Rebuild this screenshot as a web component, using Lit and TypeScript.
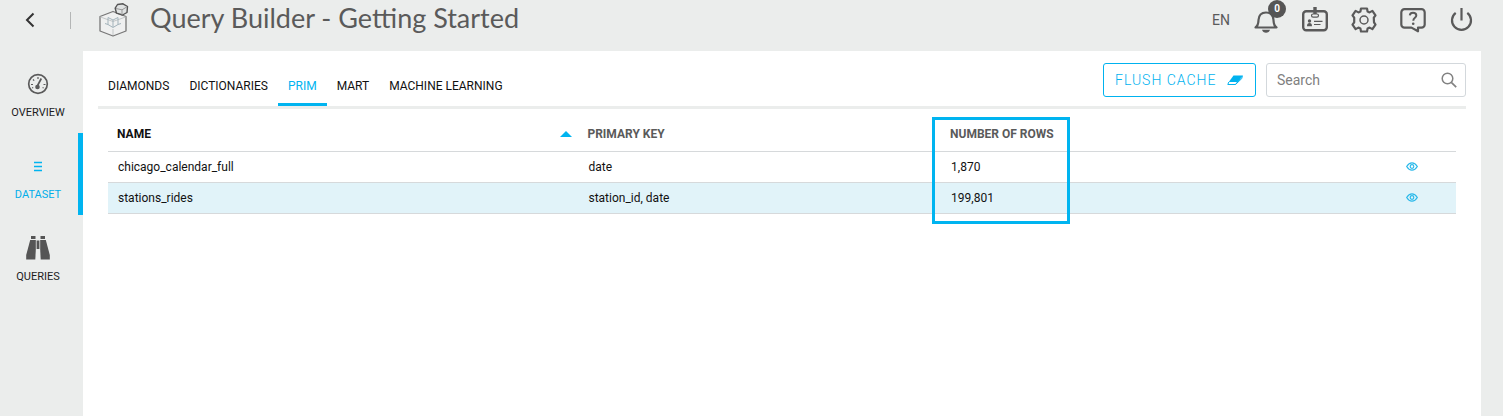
import { LitElement, html, css, svg, nothing } from "lit";
import { customElement, property, state } from "lit/decorators.js";
import { classMap } from "lit/directives/class-map.js";

interface Dataset {
  name: string;
  key: string;
  rows: number;
}

const DATASETS: Dataset[] = [
  { name: "chicago_calendar_full", key: "date", rows: 1870 },
  { name: "stations_rides", key: "station_id, date", rows: 199801 },
];

const TABS = ["DIAMONDS", "DICTIONARIES", "PRIM", "MART", "MACHINE LEARNING"];

const icons = {
  back: svg`<path d="M15.500 5.500 9 12l6.500 6.500" fill="none" stroke="#333" stroke-width="2"/>`,
  cube: svg`
    <g fill="none" stroke-linejoin="round">
      <path d="M1 13.500 14 8.500 27 13.500V28L14 33 1 28Z" fill="#eff0f0" stroke="#777" stroke-width="1.300"/>
      <path d="M1.500 14 14 18.500 26.500 14M14 26v6" stroke="#c3c7c8"/>
      <path d="M9 14.500v7l5 3 5-3v-7M9 14.500l5 2.500 5-2.500M14 17v7M9 21.500l-3-1M19 21.500l3-1" stroke="#a3b3bb"/>
      <path d="M18.500 1.500 24 .8l4.500 2.700-.5 6-4.500 2.500-6-1.800-1.300-5Z" fill="#dfe2e2" stroke="#555" stroke-width="1.400"/>
      <path d="M17 5.500l6 1.300 5-3M23 6.800v5" stroke="#999"/>
    </g>`,
  bell: svg`
    <path d="M2.500 20.500c3-2 2.800-4.500 3-7.500.3-4.500 3-7.500 7.500-7.500s7.200 3 7.500 7.500c.2 3 0 5.500 3 7.500Z" fill="none" stroke="#5a5a5a" stroke-width="2.200" stroke-linejoin="round"/>
    <path d="M9 22.800h8c-.5 2-2 3-4 3s-3.500-1-4-3Z" fill="#5a5a5a"/>`,
  card: svg`
    <rect x="1.200" y="4.300" width="23.600" height="19" rx="3" fill="none" stroke="#5a5a5a" stroke-width="2.400"/>
    <path d="M11.300 0h3.400v7h-3.400z" fill="#5a5a5a"/>
    <rect x="9.500" y="7" width="7" height="3.200" rx="1.600" fill="#ebedec" stroke="#5a5a5a" stroke-width="1.200"/>
    <circle cx="7.500" cy="14" r="1.700" fill="#5a5a5a"/>
    <path d="M5 19.200c0-2 .8-3.200 2.500-3.200s2.500 1.200 2.500 3.200Z" fill="#5a5a5a"/>
    <path d="M12 14.300h8.500M12 17.500h6.500" stroke="#5a5a5a" stroke-width="1.200"/>`,
  gear: svg`
    <g fill="none" stroke="#5a5a5a">
      <path d="M10 1.500h6l.6 3 2 .9 2.800-1.500 3.100 4.400-1.700 2.400.2 4.600 1.500 2.400-3.100 4.400-2.800-1.500-2 .9-.6 3h-6l-.6-3-2-.9-2.800 1.500-3.100-4.400 1.700-2.400V10.700L1.500 8.300l3.100-4.400 2.800 1.500 2-.9Z" stroke-width="2.200" stroke-linejoin="round"/>
      <circle cx="13" cy="13" r="4" stroke-width="1.500"/>
    </g>`,
  help: svg`
    <path d="M4.500 2.200h17a3.200 3.200 0 0 1 3.200 3.200v12a3.200 3.200 0 0 1-3.200 3.200H18v3.700l-6.500-3.700h-7a3.200 3.200 0 0 1-3.200-3.200v-12a3.200 3.200 0 0 1 3.200-3.200Z" fill="none" stroke="#5a5a5a" stroke-width="2.200" stroke-linejoin="round"/>
    <path d="M9.800 8.300c.2-1.700 1.400-2.500 3.200-2.500s3.300 1 3.300 2.700c0 2.400-3 2.300-3 5.200" fill="none" stroke="#5a5a5a" stroke-width="2"/>
    <circle cx="13.200" cy="16.800" r="1.300" fill="#5a5a5a"/>`,
  power: svg`
    <path d="M12.500 1v12.500M6.700 5.800a9.500 9.500 0 1 0 11.600 0" fill="none" stroke="#5a5a5a" stroke-width="2.200"/>`,
  gauge: svg`
    <circle cx="12" cy="12" r="9.300" fill="none" stroke="#5a5a5a" stroke-width="1.700"/>
    <path d="M5 12.500h2M7 7.500l1.200 1.200M12 5v2M17.500 12.500h2M6.200 16l1-.5M17.600 16l-1-.5" stroke="#5a5a5a" stroke-width="1.200"/>
    <path d="m15.300 6.500-4 7.500" stroke="#5a5a5a" stroke-width="1.700"/>
    <circle cx="11.500" cy="15" r="2.300" fill="#5a5a5a"/>`,
  list: svg`<path d="M8 8.500h8M8 12.500h8M8 16.500h8" fill="none" stroke="#00b4f0" stroke-width="1.400"/>`,
  binoculars: svg`
    <g fill="#555">
      <path d="M5 0h4.500v3H5zM14.500 0H19v3h-4.500z"/>
      <path d="M4.200 4h5.600v9.500L9.300 23.500H.2v-4.500Z"/>
      <path d="M19.800 4h-5.600v9.500l.5 10h9.100v-4.500Z"/>
      <path d="M10.600 4.500h2.800v8.500h-2.800z"/>
    </g>`,
  eraser: svg`
    <path d="M6.500.5H15.500L10.500 7H1.800Z" fill="#00b2ef"/>
    <path d="M1.800 7 .8 9.500h7.700L10.500 7 15.300.8 14.800 3.500 8.500 9.500" fill="none" stroke="#00b2ef" stroke-width="1" stroke-linejoin="round"/>`,
  search: svg`
    <circle cx="6.500" cy="6.500" r="5.300" fill="none" stroke="#828282" stroke-width="1.500"/>
    <path d="m10.300 10.300 4.900 4.900" stroke="#828282" stroke-width="1.700"/>`,
  eye: svg`
    <path d="M.7 4.500C2.200 2 4 .8 6 .8s3.800 1.200 5.300 3.700C9.800 7 8 8.200 6 8.200S2.200 7 .7 4.500Z" fill="none" stroke="#2cb9ea" stroke-width="1.300"/>
    <circle cx="6" cy="4.500" r="1.800" fill="none" stroke="#2cb9ea" stroke-width="1.200"/>`,
};

const NAV = [
  { label: "OVERVIEW", icon: icons.gauge },
  { label: "DATASET", icon: icons.list },
  { label: "QUERIES", icon: icons.binoculars },
];

const reset = css`
  *,
  *::before,
  *::after {
    box-sizing: border-box;
  }
  button {
    margin: 0;
    padding: 0;
    border: 0;
    background: none;
    color: inherit;
    font: inherit;
    cursor: pointer;
  }
  a {
    color: inherit;
    text-decoration: none;
  }
  svg {
    display: block;
  }
`;

@customElement("app-header")
class AppHeader extends LitElement {
  static styles = [
    reset,
    css`
      :host {
        display: flex;
        align-items: center;
        height: 40px;
        margin-bottom: 11px;
        padding: 0 28px 0 18px;
        color: #5a5a5a;
      }
      .separator {
        width: 1px;
        height: 17px;
        margin: 0 28px;
        background: #b4b6b6;
      }
      .title {
        flex: 1;
        margin: 0 0 4px 21px;
        font: 400 27px/36px Lato, sans-serif;
        white-space: nowrap;
      }
      .actions {
        display: flex;
        align-items: center;
        gap: 23px;
        font-size: 14px;
      }
      .notifications {
        position: relative;
      }
      .badge {
        position: absolute;
        top: -7px;
        right: -7px;
        width: 18px;
        height: 18px;
        border-radius: 50%;
        background: #555;
        color: #fff;
        font: 700 10px/18px Roboto, sans-serif;
        text-align: center;
      }
    `,
  ];

  render() {
    return html`
      <button aria-label="Back"><svg width="24" height="24" viewBox="0 0 24 24">${icons.back}</svg></button>
      <span class="separator"></span>
      <svg width="30" height="35" viewBox="0 0 30 35">${icons.cube}</svg>
      <h1 class="title">Query Builder - Getting Started</h1>
      <div class="actions">
        <button>EN</button>
        <button class="notifications" aria-label="Notifications">
          ${this.icon(icons.bell)}<span class="badge">0</span>
        </button>
        <button aria-label="Account">${this.icon(icons.card)}</button>
        <button aria-label="Settings">${this.icon(icons.gear)}</button>
        <button aria-label="Help">${this.icon(icons.help)}</button>
        <button aria-label="Log out">${this.icon(icons.power)}</button>
      </div>
    `;
  }

  private icon(shape: unknown) {
    return html`<svg width="26" height="26" viewBox="0 0 26 26">${shape}</svg>`;
  }
}

@customElement("app-sidebar")
class AppSidebar extends LitElement {
  @property() active = "DATASET";

  static styles = [
    reset,
    css`
      :host {
        display: block;
      }
      .item {
        display: flex;
        flex-direction: column;
        align-items: center;
        gap: 8px;
        height: 82px;
        padding: 21px 2px 0 0;
        border-right: 5px solid transparent;
        font-size: 11px;
        line-height: 17px;
        color: #1c1c1c;
      }
      .item.active {
        border-color: #00b4f0;
        color: #00aeea;
      }
    `,
  ];

  render() {
    return html`<nav>
      ${NAV.map(
        (item) => html`<a href="#" class=${classMap({ item: true, active: item.label === this.active })}>
          <svg width="24" height="24" viewBox="0 0 24 24">${item.icon}</svg>
          ${item.label}
        </a>`
      )}
    </nav>`;
  }
}

@customElement("dataset-table")
class DatasetTable extends LitElement {
  @property({ attribute: false }) datasets: Dataset[] = [];

  static styles = [
    reset,
    css`
      :host {
        display: block;
      }
      table {
        width: 100%;
        border-collapse: collapse;
        table-layout: fixed;
        font-size: 12px;
        line-height: 14px;
        color: #111;
      }
      .col-name {
        width: 34.9%;
      }
      .col-key {
        width: 26.9%;
      }
      .col-view {
        width: 88px;
      }
      th {
        position: relative;
        height: 33px;
        padding: 0 6px 0 9px;
        border-bottom: 1px solid #d6d9db;
        text-align: left;
        font-weight: 700;
        color: #5a5a5a;
      }
      td {
        height: 31px;
        padding: 0 10px;
        border-bottom: 1px solid #d6d9db;
      }
      tbody tr:nth-child(even) {
        background: #e1f3f9;
      }
      .sorted {
        color: #111;
      }
      .label {
        display: flex;
        align-items: center;
        justify-content: space-between;
      }
      .arrow {
        border: 6px solid transparent;
        border-top: 0;
        border-bottom-color: #00b4f0;
      }
      .highlight {
        position: absolute;
        top: -1px;
        left: -9px;
        width: 138px;
        height: 107px;
        border: 3px solid #00b4f0;
        pointer-events: none;
      }
      .view {
        display: block;
        margin: 0 auto;
      }
    `,
  ];

  render() {
    return html`<table>
      <colgroup>
        <col class="col-name" /><col class="col-key" /><col /><col class="col-view" />
      </colgroup>
      <thead>
        <tr>
          <th class="sorted" aria-sort="ascending"><span class="label">NAME<span class="arrow"></span></span></th>
          <th>PRIMARY KEY</th>
          <th>NUMBER OF ROWS<span class="highlight"></span></th>
          <th></th>
        </tr>
      </thead>
      <tbody>
        ${this.datasets.map(
          (d) => html`<tr>
            <td>${d.name}</td>
            <td>${d.key}</td>
            <td>${d.rows.toLocaleString("en-US")}</td>
            <td>
              <button class="view" aria-label="View ${d.name}">
                <svg width="12" height="9" viewBox="0 0 12 9">${icons.eye}</svg>
              </button>
            </td>
          </tr>`
        )}
      </tbody>
    </table>`;
  }
}

@customElement("app-root")
class AppRoot extends LitElement {
  @state() private tab = "PRIM";
  @state() private query = "";

  static styles = [
    reset,
    css`
      :host {
        display: flex;
        flex-direction: column;
        min-height: 100vh;
        background: #ebedec;
        font-family: Roboto, sans-serif;
      }
      .body {
        flex: 1;
        display: grid;
        grid-template-columns: 83px minmax(0, 1fr);
        padding-right: 22px;
      }
      main {
        padding: 12px 15px;
        background: #fff;
      }
      .toolbar {
        display: flex;
        align-items: flex-start;
        gap: 10px;
        border-bottom: 3px solid #ebedec;
      }
      .tabs {
        display: flex;
        flex: 1;
      }
      .tab {
        height: 43px;
        padding: 6px 10px 0;
        border-bottom: 3px solid transparent;
        font-size: 12px;
        color: #111;
      }
      .tab.active {
        border-color: #00b4f0;
        color: #00b4f0;
      }
      .flush {
        display: flex;
        align-items: center;
        justify-content: space-between;
        width: 153px;
        height: 34px;
        padding: 0 12px 0 11px;
        border: 1px solid #00b2ef;
        border-radius: 3px;
        color: #00b2ef;
        font-weight: 300;
        font-size: 14px;
        letter-spacing: 1px;
      }
      .search {
        display: flex;
        align-items: center;
        width: 200px;
        height: 34px;
        padding: 0 8px 0 10px;
        border: 1px solid #d3d8dc;
        border-radius: 3px;
      }
      .search input {
        flex: 1;
        min-width: 0;
        padding: 0;
        border: 0;
        outline: 0;
        background: none;
        font: 14px/20px Roboto, sans-serif;
        color: #333;
      }
      .search input::placeholder {
        color: #808080;
        opacity: 1;
      }
      dataset-table {
        margin: 9px 10px 0;
      }
    `,
  ];

  render() {
    const shown = DATASETS.filter((d) => d.name.includes(this.query.toLowerCase()));
    return html`
      <app-header></app-header>
      <div class="body">
        <app-sidebar></app-sidebar>
        <main>
          <div class="toolbar">
            <div class="tabs" role="tablist">
              ${TABS.map(
                (t) => html`<button
                  role="tab"
                  aria-selected=${t === this.tab}
                  class=${classMap({ tab: true, active: t === this.tab })}
                  @click=${() => (this.tab = t)}
                >${t}</button>`
              )}
            </div>
            <button class="flush">
              FLUSH CACHE
              <svg width="16" height="11" viewBox="0 0 16 11">${icons.eraser}</svg>
            </button>
            <label class="search">
              <input
                type="text"
                placeholder="Search"
                aria-label="Search"
                @input=${(e: Event) => (this.query = (e.target as HTMLInputElement).value)}
              />
              <svg width="16" height="16" viewBox="0 0 16 16">${icons.search}</svg>
            </label>
          </div>
          ${this.tab ? html`<dataset-table .datasets=${shown}></dataset-table>` : nothing}
        </main>
      </div>
    `;
  }
}
